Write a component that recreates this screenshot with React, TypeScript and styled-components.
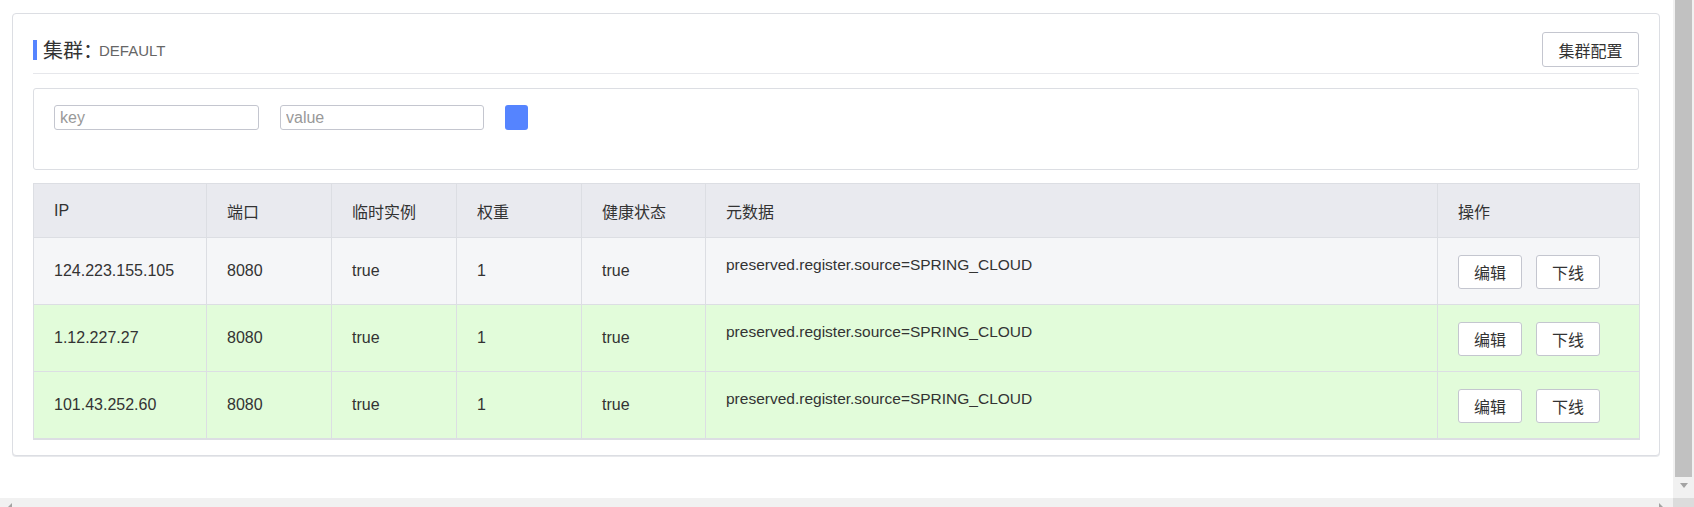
import React from "react";
import styled, { createGlobalStyle } from "styled-components";

const GlobalStyle = createGlobalStyle`
  html, body {
    margin: 0;
    padding: 0;
    background: #ffffff;
    overflow: hidden;
  }
  body {
    font-family: "Liberation Sans", "Noto Sans CJK SC", sans-serif;
    color: #333333;
  }
  * { box-sizing: border-box; }
`;

const Viewport = styled.div`
  width: 1694px;
  height: 507px;
  display: grid;
  grid-template-columns: 1673px 21px;
  grid-template-rows: 498px 9px;
  overflow: hidden;
`;

const Main = styled.main`
  overflow: hidden;
  padding: 13px 13px 0 12px;
`;

const Card = styled.section`
  border: 1px solid #dcdee3;
  border-radius: 4px;
  padding: 18px 20px 15px;
  box-shadow: 0 1px 0 #e8e9ec;
  background: #ffffff;
`;

const Header = styled.header`
  display: flex;
  align-items: center;
  justify-content: space-between;
  padding-bottom: 6px;
  border-bottom: 1px solid #e6e7eb;
`;

const Title = styled.div`
  display: flex;
  align-items: center;
`;

const TitleBar = styled.span`
  width: 4px;
  height: 20px;
  background: #5584ff;
  margin-right: 6px;
`;

const TitleLabel = styled.span`
  font-family: "Noto Sans CJK SC", sans-serif;
  font-size: 20px;
  color: #333333;
  line-height: 24px;
  margin-right: -4px;
`;

const ClusterName = styled.span`
  font-size: 15px;
  color: #666666;
  line-height: 24px;
  padding-top: 2px;
`;

const Button = styled.button<{ $w: number; $h: number }>`
  width: ${(p) => p.$w}px;
  height: ${(p) => p.$h}px;
  padding: 0;
  border: 1px solid #c4c6cf;
  border-radius: 3px;
  background: #ffffff;
  color: #333333;
  font-family: "Noto Sans CJK SC", sans-serif;
  font-size: 16px;
  line-height: 1;
  cursor: pointer;
`;

const FilterBox = styled.div`
  margin-top: 14px;
  border: 1px solid #dcdee3;
  border-radius: 3px;
  padding: 16px 20px 39px;
  display: flex;
  align-items: flex-start;
  gap: 21px;
`;

const Input = styled.input<{ $w: number }>`
  width: ${(p) => p.$w}px;
  height: 25px;
  border: 1px solid #c4c6cf;
  border-radius: 3px;
  padding: 0 5px;
  font-family: "Liberation Sans", sans-serif;
  font-size: 16px;
  color: #333333;
  outline: none;
  &::placeholder {
    color: #999999;
  }
`;

const SearchButton = styled.button`
  width: 23px;
  height: 25px;
  border: none;
  border-radius: 3px;
  background: #5584ff;
  padding: 0;
`;

const Table = styled.table`
  margin-top: 13px;
  width: 1606px;
  border-collapse: collapse;
  table-layout: fixed;
  border: 1px solid #dcdee3;
  border-bottom-width: 2px;
`;

const Th = styled.th`
  height: 54px;
  padding: 0 20px;
  background: #e9eaef;
  border: 1px solid #dcdee3;
  text-align: left;
  font-weight: normal;
  font-size: 16px;
  color: #333333;
`;

const Row = styled.tr<{ $healthy: boolean }>`
  background: ${(p) => (p.$healthy ? "#e2fcda" : "#f5f6f8")};
`;

const Td = styled.td<{ $top?: boolean }>`
  height: 67px;
  padding: ${(p) => (p.$top ? "16px 20px 0" : "0 20px")};
  border: 1px solid #dcdee3;
  vertical-align: ${(p) => (p.$top ? "top" : "middle")};
  font-size: ${(p) => (p.$top ? "15.5px" : "16px")};
  line-height: 22px;
  color: #333333;
`;

const Actions = styled.div`
  display: flex;
  gap: 14px;
  padding-top: 2px;
`;

const VScroll = styled.div`
  background: #f1f1f1;
  display: flex;
  flex-direction: column;
  align-items: center;
  padding: 0 2px;
`;

const Thumb = styled.div`
  width: 100%;
  height: 477px;
  background: #c1c1c1;
`;

const DownArrow = styled.span`
  margin-top: 6px;
  width: 0;
  height: 0;
  border-left: 4.5px solid transparent;
  border-right: 4.5px solid transparent;
  border-top: 5px solid #a3a3a3;
`;

const HScroll = styled.div`
  background: #f1f1f1;
  display: flex;
  justify-content: space-between;
  align-items: flex-start;
  padding: 5px 10px 0 8px;
  overflow: hidden;
`;

const SideArrow = styled.span<{ $dir: "left" | "right" }>`
  width: 0;
  height: 0;
  border-top: 4px solid transparent;
  border-bottom: 4px solid transparent;
  ${(p) =>
    p.$dir === "left"
      ? "border-right: 4px solid #a3a3a3;"
      : "border-left: 4px solid #a3a3a3;"}
`;

const Corner = styled.div`
  background: #dcdcdc;
`;

type Instance = { ip: string; healthy: boolean };

const instances: Instance[] = [
  { ip: "124.223.155.105", healthy: false },
  { ip: "1.12.227.27", healthy: true },
  { ip: "101.43.252.60", healthy: true },
];

const columns = [173, 125, 125, 125, 124, 732, 202];
const headers = ["IP", "端口", "临时实例", "权重", "健康状态", "元数据", "操作"];

export default function App() {
  return (
    <>
      <GlobalStyle />
      <Viewport>
        <Main>
          <Card>
            <Header>
              <Title>
                <TitleBar />
                <TitleLabel>集群：</TitleLabel>
                <ClusterName>DEFAULT</ClusterName>
              </Title>
              <Button $w={97} $h={35}>集群配置</Button>
            </Header>
            <FilterBox>
              <Input $w={205} placeholder="key" />
              <Input $w={204} placeholder="value" />
              <SearchButton aria-label="add" />
            </FilterBox>
            <Table>
              <colgroup>
                {columns.map((w, i) => (
                  <col key={i} style={{ width: w }} />
                ))}
              </colgroup>
              <thead>
                <tr>
                  {headers.map((h) => (
                    <Th key={h}>{h}</Th>
                  ))}
                </tr>
              </thead>
              <tbody>
                {instances.map((it) => (
                  <Row key={it.ip} $healthy={it.healthy}>
                    <Td>{it.ip}</Td>
                    <Td>8080</Td>
                    <Td>true</Td>
                    <Td>1</Td>
                    <Td>true</Td>
                    <Td $top>preserved.register.source=SPRING_CLOUD</Td>
                    <Td>
                      <Actions>
                        <Button $w={64} $h={34}>编辑</Button>
                        <Button $w={64} $h={34}>下线</Button>
                      </Actions>
                    </Td>
                  </Row>
                ))}
              </tbody>
            </Table>
          </Card>
        </Main>
        <VScroll>
          <Thumb />
          <DownArrow />
        </VScroll>
        <HScroll>
          <SideArrow $dir="left" />
          <SideArrow $dir="right" />
        </HScroll>
        <Corner />
      </Viewport>
    </>
  );
}
